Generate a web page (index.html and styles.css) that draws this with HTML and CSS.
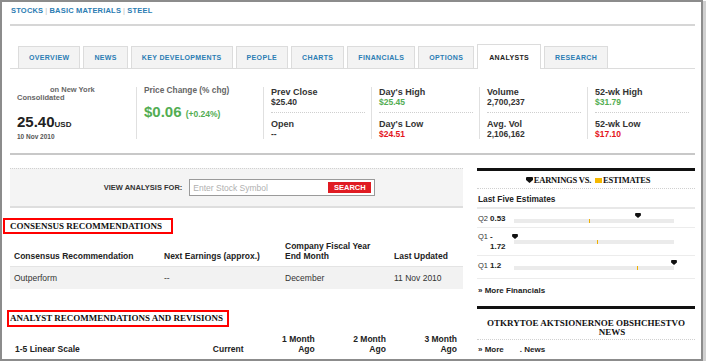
FILE: index.html
```html
<!DOCTYPE html>
<html lang="en">
<head>
    <meta charset="UTF-8">
    <title>Analysts</title>
    <link rel="stylesheet" href="styles.css">
</head>
<body>
<div class="frame">
    <div class="page">
        <!-- Breadcrumb -->
        <div class="crumbs">
            <a href="#">STOCKS</a><span class="sep">|</span><a href="#">BASIC MATERIALS</a><span class="sep">|</span><a href="#">STEEL</a>
        </div>

        <!-- Tabs -->
        <ul class="tabs">
            <li>OVERVIEW</li>
            <li>NEWS</li>
            <li>KEY DEVELOPMENTS</li>
            <li>PEOPLE</li>
            <li>CHARTS</li>
            <li>FINANCIALS</li>
            <li>OPTIONS</li>
            <li class="active">ANALYSTS</li>
            <li>RESEARCH</li>
        </ul>

        <!-- Quote strip -->
        <div class="quote">
            <div class="q-col q-last">
                <div class="exch"><span class="indent">on New York</span><br>Consolidated</div>
                <div class="last">25.40<span class="cur">USD</span></div>
                <div class="date">10 Nov 2010</div>
            </div>
            <div class="q-col q-change">
                <div class="small-label">Price Change (% chg)</div>
                <div class="chg">$0.06 <span class="pct">(+0.24%)</span></div>
            </div>
            <div class="q-col">
                <div class="pair first"><div class="lbl">Prev Close</div><div class="val">$25.40</div></div>
                <div class="pair"><div class="lbl">Open</div><div class="val">--</div></div>
            </div>
            <div class="q-col">
                <div class="pair first"><div class="lbl">Day's High</div><div class="val up">$25.45</div></div>
                <div class="pair"><div class="lbl">Day's Low</div><div class="val down">$24.51</div></div>
            </div>
            <div class="q-col">
                <div class="pair first"><div class="lbl">Volume</div><div class="val">2,700,237</div></div>
                <div class="pair"><div class="lbl">Avg. Vol</div><div class="val">2,106,162</div></div>
            </div>
            <div class="q-col">
                <div class="pair first"><div class="lbl">52-wk High</div><div class="val up">$31.79</div></div>
                <div class="pair"><div class="lbl">52-wk Low</div><div class="val down">$17.10</div></div>
            </div>
        </div>

        <div class="main">
            <div class="left">
                <div class="search-bar">
                    <label for="symbol">VIEW ANALYSIS FOR:</label>
                    <div class="search-box">
                        <input type="text" id="symbol" placeholder="Enter Stock Symbol">
                        <button type="button">SEARCH</button>
                    </div>
                </div>

                <h3 class="section-title consensus">CONSENSUS RECOMMENDATIONS</h3>
                <table class="data">
                    <thead>
                        <tr>
                            <th class="c1">Consensus Recommendation</th>
                            <th class="c2">Next Earnings (approx.)</th>
                            <th class="c3">Company Fiscal Year<br>End Month</th>
                            <th>Last Updated</th>
                        </tr>
                    </thead>
                    <tbody>
                        <tr class="shaded">
                            <td>Outperform</td>
                            <td>--</td>
                            <td>December</td>
                            <td>11 Nov 2010</td>
                        </tr>
                    </tbody>
                </table>

                <h3 class="section-title revisions">ANALYST RECOMMENDATIONS AND REVISIONS</h3>
                <table class="data scale">
                    <thead>
                        <tr>
                            <th class="s1">1-5 Linear Scale</th>
                            <th class="num cur-col">Current</th>
                            <th class="num">1 Month<br>Ago</th>
                            <th class="num">2 Month<br>Ago</th>
                            <th class="num">3 Month<br>Ago</th>
                        </tr>
                    </thead>
                </table>
            </div>

            <div class="right">
                <div class="box-title earn-title">
                    <svg class="marker" width="7" height="6" viewBox="0 0 7 6"><path d="M0 1 Q0 0 1 0 H6 Q7 0 7 1 V3 L3.5 6 L0 3 Z" fill="#111"/></svg>EARNINGS VS. <span class="est-key"></span>ESTIMATES
                </div>
                <div class="sub">Last Five Estimates</div>

                <div class="est">
                    <span class="q">Q2</span>
                    <span class="v">0.53</span>
                    <div class="bar">
                        <span class="tick" style="left: 75px"></span>
                        <svg class="pin" style="left: 121px" width="6" height="5" viewBox="0 0 7 6"><path d="M0 1 Q0 0 1 0 H6 Q7 0 7 1 V3 L3.5 6 L0 3 Z" fill="#111"/></svg>
                    </div>
                </div>
                <div class="est tall">
                    <span class="q">Q1</span>
                    <span class="v">-<br>1.72</span>
                    <div class="bar">
                        <span class="tick" style="left: 83px"></span>
                        <svg class="pin" style="left: -2px" width="6" height="5" viewBox="0 0 7 6"><path d="M0 1 Q0 0 1 0 H6 Q7 0 7 1 V3 L3.5 6 L0 3 Z" fill="#111"/></svg>
                    </div>
                </div>
                <div class="est last-est">
                    <span class="q">Q1</span>
                    <span class="v">1.2</span>
                    <div class="bar">
                        <span class="tick" style="left: 123px"></span>
                        <svg class="pin" style="left: 157px" width="6" height="5" viewBox="0 0 7 6"><path d="M0 1 Q0 0 1 0 H6 Q7 0 7 1 V3 L3.5 6 L0 3 Z" fill="#111"/></svg>
                    </div>
                </div>

                <div class="more-link">&raquo; More Financials</div>

                <div class="box-title news-title">
                    OTKRYTOE AKTSIONERNOE OBSHCHESTVO<br><span class="news-word">NEWS</span>
                </div>
                <div class="more-news"><span>&raquo; More</span><span class="news-link">. News</span></div>
            </div>
        </div>
    </div>
</div>
</body>
</html>
```

FILE: styles.css
```css
body {
    margin: 0;
    padding: 0;
    background-color: #fff;
    font-family: "Liberation Sans", Arial, sans-serif;
    color: #222;
}

/* Screenshot frame */
.frame {
    width: 703px;
    height: 361px;
    box-sizing: border-box;
    border: 2px solid #8c8c8c;
    box-shadow: 3px 1px 0 #d0d0d0;
    overflow: hidden;
}

.page {
    padding: 3px 6px 0 8px;
}

/* Breadcrumb */
.crumbs {
    height: 12px;
    line-height: 12px;
    padding: 0 0 7px 1px;
    border-bottom: 2px solid #d6d6d6;
    font-size: 7.5px;
    font-weight: bold;
    letter-spacing: 0.2px;
}

.crumbs a {
    color: #2b7db3;
    text-decoration: none;
}

.crumbs .sep {
    color: #bbb;
    font-weight: normal;
    margin: 0 2px;
}

/* Tabs */
.tabs {
    list-style: none;
    margin: 18px 0 0;
    padding: 0 0 0 8px;
    display: flex;
    align-items: flex-end;
    gap: 3px;
    border-bottom: 1px solid #dcdcdc;
}

.tabs li {
    height: 21px;
    line-height: 22px;
    padding: 0 10px;
    background-color: #f3f3f3;
    border: 1px solid #dcdcdc;
    border-bottom: none;
    color: #2b7db3;
    font-size: 7px;
    font-weight: bold;
    letter-spacing: 0.35px;
}

.tabs li.active {
    height: 24px;
    line-height: 26px;
    background-color: #fff;
    color: #222;
    margin-bottom: -1px;
    padding: 0 11px;
}

/* Quote strip */
.quote {
    display: flex;
    padding: 18px 0 14px;
    border-bottom: 2px solid #c8c8c8;
}

.q-col {
    height: 52px;
    box-sizing: border-box;
    padding-left: 7px;
    border-left: 1px solid #e0e0e0;
    width: 108px;
}

.q-col.q-last {
    width: 126px;
    border-left: none;
}

.q-col.q-change {
    width: 127px;
}

.exch {
    margin-top: -1px;
    font-size: 7.5px;
    font-weight: bold;
    line-height: 8px;
    color: #666;
}

.exch .indent {
    padding-left: 33px;
}

.last {
    margin-top: 12px;
    font-size: 15px;
    font-weight: bold;
    line-height: 16px;
    color: #222;
}

.last .cur {
    font-size: 8px;
}

.date {
    font-size: 6.5px;
    font-weight: bold;
    line-height: 7px;
    color: #555;
}

.small-label {
    margin-top: -1px;
    font-size: 8.3px;
    font-weight: bold;
    line-height: 8px;
    color: #666;
}

.chg {
    margin-top: 10px;
    font-size: 15px;
    font-weight: bold;
    line-height: 16px;
    color: #52ad52;
}

.chg .pct {
    font-size: 8.5px;
}

.pair {
    margin-right: 6px;
}

.pair.first {
    padding-bottom: 5px;
    border-bottom: 1px dotted #cfcfcf;
    margin-bottom: 6px;
}

.lbl {
    font-size: 9px;
    font-weight: bold;
    line-height: 10px;
    color: #333;
}

.val {
    font-size: 8.5px;
    font-weight: bold;
    line-height: 10px;
    color: #333;
}

.val.up {
    color: #52ad52;
}

.val.down {
    color: #e4141b;
}

/* Main area */
.main {
    display: flex;
    margin-top: 13px;
    gap: 14px;
}

.left {
    width: 453px;
}

.search-bar {
    height: 37px;
    border-top: 1px dotted #d0d0d0;
    border-bottom: 2px solid #dedede;
    background-color: #f4f4f4;
    display: flex;
    justify-content: center;
    align-items: center;
    gap: 7px;
}

.search-bar label {
    margin-left: 6px;
    font-size: 7.5px;
    font-weight: bold;
    color: #333;
}

.search-box {
    width: 186px;
    height: 17px;
    box-sizing: border-box;
    border: 1px solid #9a9a9a;
    background-color: #fff;
    display: flex;
    align-items: center;
    padding: 0 3px;
}

.search-box input {
    flex: 1;
    min-width: 0;
    border: none;
    padding: 0;
    margin: 0;
    outline: none;
    font-family: "Liberation Sans", Arial, sans-serif;
    font-size: 8.5px;
    background: transparent;
}

.search-box input::placeholder {
    color: #b0b0b0;
}

.search-box button {
    width: 43px;
    height: 11px;
    padding: 0;
    border: none;
    background-color: #e01b22;
    color: #fff;
    font-family: "Liberation Sans", Arial, sans-serif;
    font-size: 7.5px;
    font-weight: bold;
    line-height: 11px;
}

/* Section headings (red boxes) */
.section-title {
    display: inline-block;
    margin: 10px 0 0 -7px;
    padding: 0 9px 0 5px;
    border: 2px solid #f00;
    font-family: "Liberation Serif", "Times New Roman", serif;
    font-size: 9px;
    font-weight: bold;
    line-height: 12px;
    color: #111;
}

.section-title.revisions {
    margin: 21px 0 0 -3px;
    padding: 0 4px 0 1px;
    line-height: 13px;
}

.data {
    width: 453px;
    border-collapse: collapse;
    font-size: 8.5px;
    margin-top: 7px;
}

.data th {
    text-align: left;
    vertical-align: bottom;
    font-weight: bold;
    line-height: 10px;
    padding: 0 4px 5px;
    border-bottom: 1px solid #e4e4e4;
    color: #222;
}

.data th.c1 {
    width: 142px;
}

.data th.c2 {
    width: 113px;
}

.data th.c3 {
    width: 101px;
}

.data td {
    height: 22px;
    padding: 0 4px;
    color: #333;
}

.data tr.shaded td {
    background-color: #f2f2f2;
}

.data.scale {
    margin-top: 7px;
    table-layout: fixed;
}

.data.scale th {
    border-bottom: none;
    padding-bottom: 0;
    width: 71px;
    box-sizing: border-box;
}

.data.scale th.s1 {
    width: 160px;
    padding-left: 5px;
}

.data.scale th.cur-col {
    width: 79px;
}

.data.scale th.num {
    text-align: right;
    padding-right: 6px;
}

/* Right column */
.right {
    width: 218px;
    border-top: 3px solid #111;
}

.box-title {
    text-align: center;
    padding: 3px 0 2px;
    border-bottom: 1px dotted #d0d0d0;
    font-family: "Liberation Serif", "Times New Roman", serif;
    font-size: 9px;
    font-weight: bold;
    line-height: 12px;
    color: #111;
}

.earn-title {
    font-size: 8.5px;
    letter-spacing: -0.2px;
    padding-left: 4px;
}

.box-title .marker {
    margin-right: 1px;
}

.est-key {
    display: inline-block;
    width: 7px;
    height: 5px;
    background-color: #f5b800;
    margin: 0 1px 0 2px;
}

.sub {
    padding: 5px 1px 2px;
    font-size: 8.3px;
    font-weight: bold;
    line-height: 11px;
    border-bottom: 2px solid #e8e8e8;
}

.est {
    display: flex;
    align-items: flex-start;
    padding: 5px 1px 3px;
    border-bottom: 1px solid #ececec;
    font-size: 8px;
    line-height: 10px;
}

.est.tall {
    padding-top: 4px;
}

.est.last-est {
    padding-bottom: 7px;
}

.est .q {
    width: 12px;
    font-size: 7.5px;
    color: #333;
}

.est .v {
    width: 24px;
    font-weight: bold;
}

.bar {
    position: relative;
    width: 160px;
    height: 4px;
    margin-top: 5px;
    background-color: #ebebeb;
}

.est.tall .bar {
    margin-top: 8px;
}

.est.last-est .bar {
    margin-top: 5px;
}

.tick {
    position: absolute;
    top: 0;
    width: 1px;
    height: 4px;
    background-color: #f0b000;
}

.pin {
    position: absolute;
    top: -6px;
}

.more-link {
    padding: 7px 1px 0;
    font-size: 8px;
    font-weight: bold;
    line-height: 10px;
    color: #222;
}

.news-title {
    margin-top: 10px;
    border-top: 3px solid #111;
    padding: 10px 0 2px;
    line-height: 9px;
}

.news-word {
    padding-left: 52px;
}

.more-news {
    padding: 5px 1px 0;
    font-size: 8px;
    font-weight: bold;
    line-height: 10px;
}

.more-news .news-link {
    margin-left: 16px;
}
```
